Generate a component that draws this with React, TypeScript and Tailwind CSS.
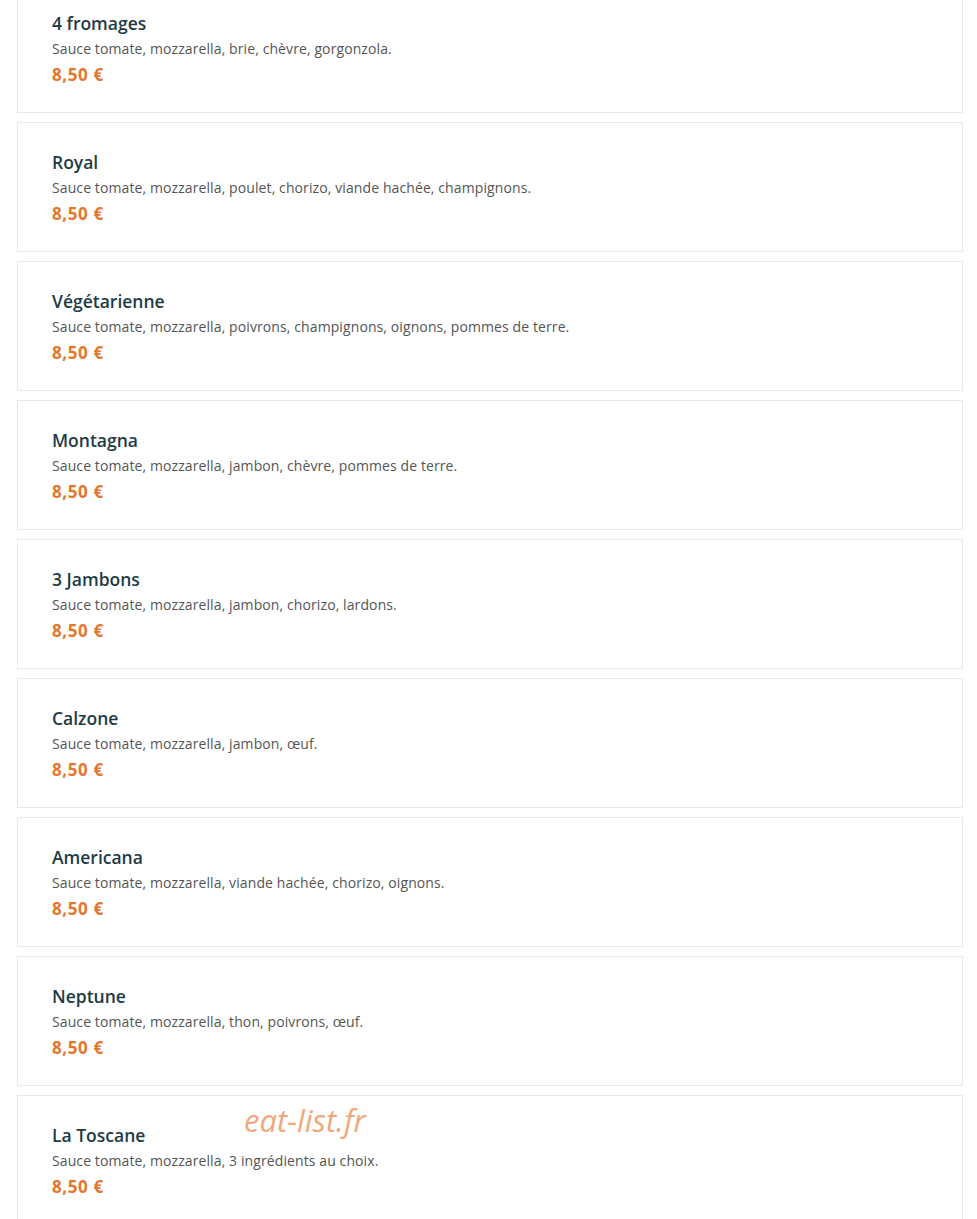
const pizzas = [
  { name: "4 fromages", desc: "Sauce tomate, mozzarella, brie, chèvre, gorgonzola." },
  { name: "Royal", desc: "Sauce tomate, mozzarella, poulet, chorizo, viande hachée, champignons." },
  { name: "Végétarienne", desc: "Sauce tomate, mozzarella, poivrons, champignons, oignons, pommes de terre." },
  { name: "Montagna", desc: "Sauce tomate, mozzarella, jambon, chèvre, pommes de terre." },
  { name: "3 Jambons", desc: "Sauce tomate, mozzarella, jambon, chorizo, lardons." },
  { name: "Calzone", desc: "Sauce tomate, mozzarella, jambon, œuf." },
  { name: "Americana", desc: "Sauce tomate, mozzarella, viande hachée, chorizo, oignons." },
  { name: "Neptune", desc: "Sauce tomate, mozzarella, thon, poivrons, œuf." },
  { name: "La Toscane", desc: "Sauce tomate, mozzarella, 3 ingrédients au choix." },
];

export default function App() {
  return (
    <div className="relative h-[1219px] overflow-hidden bg-white font-['Open_Sans',sans-serif]">
      <div className="flex flex-col gap-[9px] pl-[17px] pr-[14px] -mt-[17px]">
        {pizzas.map((p) => (
          <div
            key={p.name}
            className="h-[130px] shrink-0 border border-[#e9e9e9] bg-white px-[34px] pt-[27px]"
          >
            <h3 className="text-[17.5px] leading-[24px] font-semibold text-[#1d3b45]">{p.name}</h3>
            <p className="mt-[1px] text-[14px] leading-[26px] tracking-[0.1px] text-[#555]">{p.desc}</p>
            <p className="text-[17px] leading-[26px] tracking-[0.6px] font-bold text-[#e5772c]">8,50 €</p>
          </div>
        ))}
      </div>
      <div className="absolute left-[244px] top-[1100px] font-['Open_Sans',sans-serif] italic text-[31px] leading-[40px] text-[#f1a77c]">
        eat-list.fr
      </div>
    </div>
  );
}
